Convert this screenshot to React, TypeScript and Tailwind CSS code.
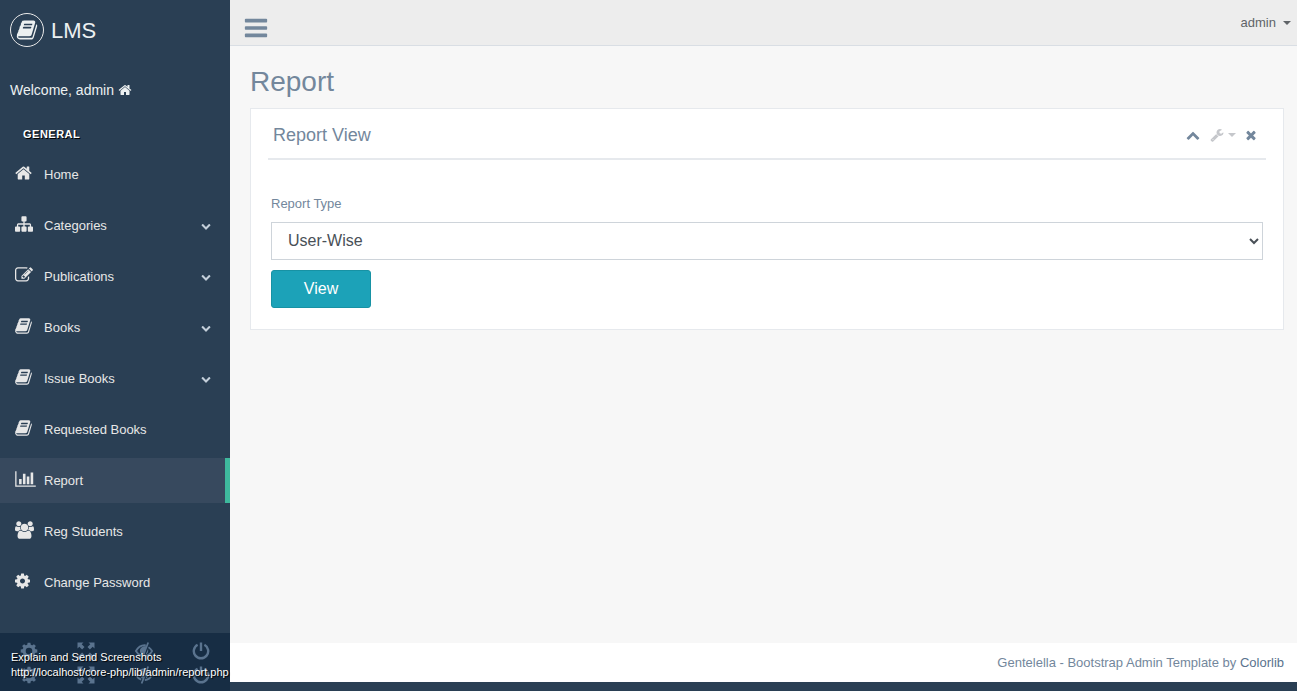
import type { ReactNode } from "react";

const PATHS = {
  home: "M1472 992v480q0 26-19 45t-45 19h-384v-384h-256v384h-384q-26 0-45-19t-19-45v-480q0-1 .5-3t.5-3l575-474 575 474q1 2 1 6zm223-69l-62 74q-8 9-21 11h-3q-13 0-21-7l-692-577-692 577q-12 8-24 7-13-2-21-11l-62-74q-8-10-7-23.5t11-21.5l719-599q32-26 76-26t76 26l244 204v-195q0-14 9-23t23-9h192q14 0 23 9t9 23v408l219 182q10 8 11 21.5t-7 23.5z",
  sitemap: "M1792 1248v320q0 40-28 68t-68 28h-320q-40 0-68-28t-28-68v-320q0-40 28-68t68-28h96v-192h-512v192h96q40 0 68 28t28 68v320q0 40-28 68t-68 28h-320q-40 0-68-28t-28-68v-320q0-40 28-68t68-28h96v-192h-512v192h96q40 0 68 28t28 68v320q0 40-28 68t-68 28h-320q-40 0-68-28t-28-68v-320q0-40 28-68t68-28h96v-192q0-52 38-90t90-38h512v-192h-96q-40 0-68-28t-28-68v-320q0-40 28-68t68-28h320q40 0 68 28t28 68v320q0 40-28 68t-68 28h-96v192h512q52 0 90 38t38 90v192h96q40 0 68 28t28 68z",
  edit: "M888 1184l116-116-152-152-116 116v56h96v96h56zm440-720q-16-16-33 1l-350 350q-17 17-1 33t33-1l350-350q17-17 1-33zm80 594v190q0 119-84.5 203.5t-203.5 84.5h-832q-119 0-203.5-84.5t-84.5-203.5v-832q0-119 84.5-203.5t203.5-84.5h832q63 0 117 25 15 7 18 23 3 17-9 29l-49 49q-14 14-32 8-23-6-45-6h-832q-66 0-113 47t-47 113v832q0 66 47 113t113 47h832q66 0 113-47t47-113v-126q0-13 9-22l64-64q15-15 35-7t20 29zm-96-738l288 288-672 672h-288v-288zm444 132l-92 92-288-288 92-92q28-28 68-28t68 28l152 152q28 28 28 68t-28 68z",
  book: "M1703 478q40 57 18 129l-275 906q-19 64-76.5 107.5t-122.5 43.5h-923q-77 0-148.5-53.5t-99.5-131.5q-24-67-2-127 0-4 3-27t4-37q1-8-3-21.5t-3-19.5q2-11 8-21t16.5-23.5 16.5-23.5q23-38 45-91.5t30-91.5q3-10 .5-30t-.5-28q3-11 17-28t17-23q21-36 42-92t25-90q1-9-2.5-32t.5-28q4-13 22-30.5t22-22.5q19-26 42.5-84.5t27.5-96.5q1-8-3-25.5t-2-26.5q2-8 9-18t18-23 17-21q8-12 16.5-30.5t15-35 16-36 19.5-32 26.5-23.5 36-11.5 47.5 5.5l-1 3q38-9 51-9h761q74 0 114 56t18 130l-274 906q-36 119-71.5 153.5t-128.5 34.5h-869q-27 0-38 15-11 16-1 43 24 70 144 70h923q29 0 56-15.5t35-41.5l300-987q7-22 5-57 38 15 59 43zm-1064 2q-4 13 2 22.5t20 9.5h608q13 0 25.5-9.5t16.5-22.5l21-64q4-13-2-22.5t-20-9.5h-608q-13 0-25.5 9.5t-16.5 22.5zm-83 256q-4 13 2 22.5t20 9.5h608q13 0 25.5-9.5t16.5-22.5l21-64q4-13-2-22.5t-20-9.5h-608q-13 0-25.5 9.5t-16.5 22.5z",
  chart: "M640 896v512h-256v-512h256zm384-512v1024h-256v-1024h256zm1024 1152v128h-2048v-1536h128v1408h1920zm-640-896v768h-256v-768h256zm384-384v1152h-256v-1152h256z",
  users: "M593 896q-162 5-265 128h-134q-82 0-138-40.5t-56-118.5q0-353 124-353 6 0 43.5 21t97.5 42.5 119 21.5q67 0 133-23-5 37-5 66 0 139 81 256zm1071 637q0 120-73 189.5t-194 69.5h-874q-121 0-194-69.5t-73-189.5q0-53 3.5-103.5t14-109 26.5-108.5 43-97.5 62-81 85.5-53.5 111.5-20q10 0 43 21.5t73 48 107 48 135 21.5 135-21.5 107-48 73-48 43-21.5q61 0 111.5 20t85.5 53.5 62 81 43 97.5 26.5 108.5 14 109 3.5 103.5zm-1024-1277q0 106-75 181t-181 75-181-75-75-181 75-181 181-75 181 75 75 181zm704 384q0 159-112.5 271.5t-271.5 112.5-271.5-112.5-112.5-271.5 112.5-271.5 271.5-112.5 271.5 112.5 112.5 271.5zm576 225q0 78-56 118.5t-138 40.5h-134q-103-123-265-128 81-117 81-256 0-29-5-66 66 23 133 23 59 0 119-21.5t97.5-42.5 43.5-21q124 0 124 353zm-128-609q0 106-75 181t-181 75-181-75-75-181 75-181 181-75 181 75 75 181z",
  gear: "M1152 896q0-106-75-181t-181-75-181 75-75 181 75 181 181 75 181-75 75-181zm512-109v222q0 12-8 23t-20 13l-185 28q-19 54-39 91 35 50 107 138 10 12 10 25t-9 23q-27 37-99 108t-94 71q-12 0-26-9l-138-108q-44 23-91 38-16 136-29 186-7 28-36 28h-222q-14 0-24.5-8.5t-11.5-21.5l-28-184q-49-16-90-37l-141 107q-10 9-25 9-14 0-25-11-126-114-165-168-7-10-7-23 0-12 8-23 15-21 51-66.5t54-70.5q-27-50-41-99l-183-27q-13-2-21-12.5t-8-23.5v-222q0-12 8-23t19-13l186-28q14-46 39-92-40-57-107-138-10-12-10-24 0-10 9-23 26-36 98.5-107.5t94.5-71.5q13 0 26 10l138 107q44-23 91-38 16-136 29-186 7-28 36-28h222q14 0 24.5 8.5t11.5 21.5l28 184q49 16 90 37l142-107q9-9 24-9 13 0 25 10 129 119 165 170 7 8 7 22 0 12-8 23-15 21-51 66.5t-54 70.5q26 50 41 98l183 28q13 2 21 12.5t8 23.5z",
  down: "M1683 808l-742 741q-19 19-45 19t-45-19l-742-741q-19-19-19-45.5t19-45.5l166-165q19-19 45-19t45 19l531 531 531-531q19-19 45-19t45 19l166 165q19 19 19 45.5t-19 45.5z",
  up: "M1683 1331l-166 165q-19 19-45 19t-45-19l-531-531-531 531q-19 19-45 19t-45-19l-166-165q-19-19-19-45.5t19-45.5l742-741q19-19 45-19t45 19l742 741q19 19 19 45.5t-19 45.5z",
  wrench: "M448 1472q0-26-19-45t-45-19-45 19-19 45 19 45 45 19 45-19 19-45zm644-420l-682 682q-37 37-90 37-52 0-91-37l-106-108q-38-36-38-90 0-53 38-91l681-681q39 98 114.5 173.5t173.5 114.5zm634-435q0 39-23 106-47 134-164.5 217.5t-258.5 83.5q-185 0-316.5-131.5t-131.5-316.5 131.5-316.5 316.5-131.5q58 0 121.5 16.5t107.5 46.5q16 11 16 28t-16 28l-293 169v224l193 107q5-3 79-48.5t135.5-81 70.5-35.5q15 0 23.5 10t8.5 25z",
  close: "M1490 1322q0 40-28 68l-136 136q-28 28-68 28t-68-28l-294-294-294 294q-28 28-68 28t-68-28l-136-136q-28-28-28-68t28-68l294-294-294-294q-28-28-28-68t28-68l136-136q28-28 68-28t68 28l294 294 294-294q28-28 68-28t68 28l136 136q28 28 28 68t-28 68l-294 294 294 294q28 28 28 68z",
  bars: "M1664 1344v128q0 26-19 45t-45 19h-1408q-26 0-45-19t-19-45v-128q0-26 19-45t45-19h1408q26 0 45 19t19 45zm0-512v128q0 26-19 45t-45 19h-1408q-26 0-45-19t-19-45v-128q0-26 19-45t45-19h1408q26 0 45 19t19 45zm0-512v128q0 26-19 45t-45 19h-1408q-26 0-45-19t-19-45v-128q0-26 19-45t45-19h1408q26 0 45 19t19 45z",
};

type IconName = keyof typeof PATHS;

function Icon({ name, box = "0 0 1792 1792", className }: { name: IconName; box?: string; className: string }) {
  return (
    <svg viewBox={box} fill="currentColor" aria-hidden="true" className={`shrink-0 ${className}`}>
      <path d={PATHS[name]} />
    </svg>
  );
}

const MENU: { label: string; icon: IconName; box: string; size: string; sub?: boolean; active?: boolean }[] = [
  { label: "Home", icon: "home", box: "64 0 1664 1792", size: "w-[17px] h-[18px]" },
  { label: "Categories", icon: "sitemap", box: "0 0 1792 1792", size: "size-[18px]", sub: true },
  { label: "Publications", icon: "edit", box: "0 0 1792 1792", size: "size-[18px]", sub: true },
  { label: "Books", icon: "book", box: "64 0 1664 1792", size: "w-[17px] h-[18px]", sub: true },
  { label: "Issue Books", icon: "book", box: "64 0 1664 1792", size: "w-[17px] h-[18px]", sub: true },
  { label: "Requested Books", icon: "book", box: "64 0 1664 1792", size: "w-[17px] h-[18px]" },
  { label: "Report", icon: "chart", box: "0 0 2048 1792", size: "w-[21px] h-[18px]", active: true },
  { label: "Reg Students", icon: "users", box: "0 0 1920 1792", size: "w-[19px] h-[18px]" },
  { label: "Change Password", icon: "gear", box: "128 0 1536 1792", size: "w-[15px] h-[18px]" },
];

const TEETH = [0, 45, 90, 135, 180, 225, 270, 315];

function Glyph({ children }: { children: ReactNode }) {
  return (
    <svg viewBox="0 0 18 18" aria-hidden="true" className="size-[18px]">
      {children}
    </svg>
  );
}

function ToolRow() {
  return (
    <div className="grid h-6 grid-cols-4 text-[#5a738e]">
      <button aria-label="Settings" className="flex items-center justify-center">
        <Glyph>
          <circle cx="9" cy="9" r="4.900" fill="none" stroke="currentColor" strokeWidth="3.200" />
          {TEETH.map((a) => (
            <path key={a} d="M7.600 0.700h2.800l.5 3H7.100z" fill="currentColor" transform={`rotate(${a} 9 9)`} />
          ))}
        </Glyph>
      </button>
      <button aria-label="FullScreen" className="flex items-center justify-center">
        <Glyph>
          <path
            fill="currentColor"
            d="M0.500 0.500h6L4.700 2.300l2.800 2.800-2.400 2.400-2.800-2.800L0.500 6.500zM17.500 0.500v6l-1.800-1.800-2.800 2.800-2.400-2.400 2.800-2.800L11.500 0.500zM0.500 17.500v-6l1.800 1.800 2.800-2.800 2.400 2.400-2.800 2.800 1.800 1.800zM17.500 17.500h-6l1.800-1.800-2.800-2.800 2.400-2.400 2.800 2.800 1.800-1.800z"
          />
        </Glyph>
      </button>
      <button aria-label="Lock" className="flex items-center justify-center">
        <Glyph>
          <g fill="none" stroke="currentColor" strokeWidth="1.800">
            <path d="M10.800 3.300C6 2.800 2.600 6 .9 9c1.300 2.200 3 3.900 5.300 4.700M13.500 5.200c1.500.9 2.700 2.300 3.600 3.800-1.600 2.800-4 4.800-7.300 5.200M13.200 0.500L6.600 17.500" />
          </g>
          <path fill="currentColor" d="M11.500 4.200L8.200 12.700A4.300 4.300 0 0 1 4.900 8.500c0-2.500 2.900-4.700 6.600-4.300zM13 7c.8 2.300-.3 4.800-2.500 5.800z" />
        </Glyph>
      </button>
      <button aria-label="Logout" className="flex items-center justify-center">
        <Glyph>
          <path d="M5.600 2.700a7.200 7.200 0 1 0 6.800 0M9 0.500v8.500" fill="none" stroke="currentColor" strokeWidth="2.400" />
        </Glyph>
      </button>
    </div>
  );
}

function Sidebar() {
  return (
    <aside className="relative flex w-[230px] shrink-0 flex-col bg-[#2a3f54] text-[#e7e7e7]">
      <a href="#" className="flex h-[60px] items-center gap-[7px] pl-[10px] text-[22px] text-[#ecf0f1]">
        <span className="flex size-[34px] items-center justify-center rounded-full border border-[#eaeaea]">
          <Icon name="book" className="size-[22px]" />
        </span>
        LMS
      </a>
      <div className="flex h-[60px] items-center gap-1 pl-[10px] text-sm text-[#ecf0f1]">
        Welcome, admin <Icon name="home" className="size-[14px]" />
      </div>
      <h3 className="mb-2 pl-[23px] pt-1 text-[11px] leading-5 font-bold tracking-[0.5px] text-white uppercase [text-shadow:1px_1px_#000]">
        General
      </h3>
      <nav>
        <ul className="flex flex-col gap-[6px]">
          {MENU.map((m) => (
            <li key={m.label}>
              <a
                href="#"
                className={`flex h-[45px] items-center border-r-[5px] pl-[15px] text-[13px] ${
                  m.active ? "border-[#3eb99d] bg-[#37495e]" : "border-transparent"
                }`}
              >
                <span className="flex w-[29px] pb-1">
                  <Icon name={m.icon} box={m.box} className={m.size} />
                </span>
                <span className="flex-1 pt-px">{m.label}</span>
                {m.sub && <Icon name="down" className="mr-[14px] size-[10px] text-[#c4cfda]" />}
              </a>
            </li>
          ))}
        </ul>
      </nav>
      <div className="relative mt-auto h-[58px] bg-[#172d44] pt-[6px]">
        <ToolRow />
        <ToolRow />
        <div className="absolute top-[17px] left-[11px] text-[11px] leading-[15px] whitespace-nowrap text-white [text-shadow:1px_1px_1px_#000]">
          <p>Explain and Send Screenshots</p>
          <p>http://localhost/core-php/lib/admin/report.php</p>
        </div>
      </div>
    </aside>
  );
}

function Caret() {
  return (
    <svg viewBox="0 0 8 4" fill="currentColor" aria-hidden="true" className="h-1 w-2">
      <path d="M0 0h8L4 4z" />
    </svg>
  );
}

export default function App() {
  return (
    <div className="flex min-h-screen bg-[#2a3f54] font-['Liberation_Sans',Arial,sans-serif] text-[13px] text-[#73879c]">
      <Sidebar />
      <div className="mb-[9px] flex min-w-0 flex-1 flex-col bg-[#f7f7f7]">
        <header className="flex h-[46px] items-center justify-between border-b border-[#d9dee4] bg-[#ededed] pr-[6px] pl-[13px]">
          <button aria-label="Toggle menu" className="pt-[10px] text-[#73879c]">
            <Icon name="bars" className="size-[26px]" />
          </button>
          <button className="flex items-center gap-[7px] text-[#606468]">
            admin <Caret />
          </button>
        </header>
        <main className="flex-1 pt-[18px] pr-[13px] pl-5">
          <h1 className="mb-2 text-[28px] leading-9">Report</h1>
          <section className="border border-[#e6e9ed] bg-white px-[17px] pb-[21px]">
            <div className="flex h-[51px] items-center justify-between border-b-2 border-[#e6e9ed] pt-[2px] pr-2 pl-[5px]">
              <h2 className="text-lg">Report View</h2>
              <div className="flex items-center">
                <button aria-label="Collapse" className="mr-[10px] text-[#73879c]">
                  <Icon name="up" className="size-[14px]" />
                </button>
                <button aria-label="Options" className="mr-2 flex items-center gap-1 text-[#c5c7cb]">
                  <Icon name="wrench" className="size-[14px]" />
                  <Caret />
                </button>
                <button aria-label="Close" className="text-[#73879c]">
                  <Icon name="close" className="size-[14px]" />
                </button>
              </div>
            </div>
            <form className="px-[3px] pt-[34px]" onSubmit={(e) => e.preventDefault()}>
              <label htmlFor="report-type" className="mb-2 block leading-5">
                Report Type
              </label>
              <select
                id="report-type"
                className="block h-[38px] w-full border border-[#ced4da] bg-white px-3 pb-[2px] text-base text-[#495057]"
              >
                <option>User-Wise</option>
              </select>
              <button className="mt-[10px] h-[38px] w-[100px] rounded-[3px] border border-[#1792a4] bg-[#1ca2b8] text-base text-white">
                View
              </button>
            </form>
          </section>
        </main>
        <footer className="flex h-[39px] items-center justify-end bg-white pr-[13px]">
          <p>
            Gentelella - Bootstrap Admin Template by{" "}
            <a href="#" className="text-[#5a738e]">
              Colorlib
            </a>
          </p>
        </footer>
      </div>
    </div>
  );
}
